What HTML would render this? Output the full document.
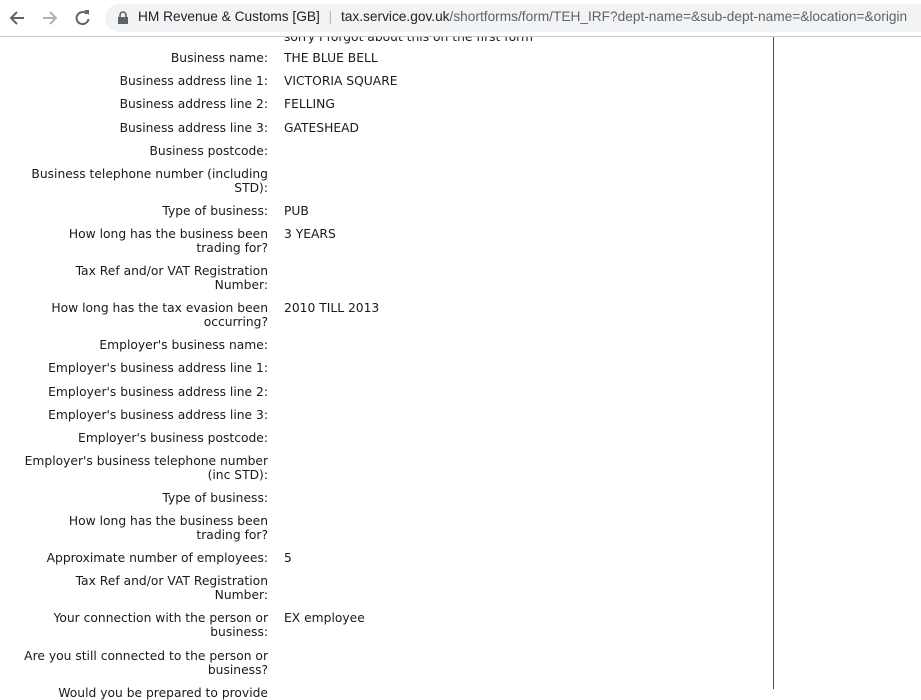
<!DOCTYPE html>
<html><head><meta charset="utf-8"><style>
body{margin:0;width:921px;height:689px;overflow:hidden;background:#fff;position:relative;font-family:"DejaVu Sans",Verdana,sans-serif;font-size:12.3px;color:#1a1a1a}
.bar{position:absolute;left:0;top:0;width:921px;height:36px;background:#fff;border-bottom:1px solid #c8c8c8;z-index:2}
.pill{position:absolute;left:105px;top:4px;width:830px;height:28px;border-radius:14px;background:#f1f3f4}
.url{position:absolute;left:138px;top:9px;font-family:"Liberation Sans",sans-serif;font-size:13.7px;color:#5f6368;white-space:nowrap}
.url b{font-weight:normal;color:#202124}
.r{position:absolute;left:0;width:921px;line-height:14px}
.l{position:absolute;right:653px;text-align:right;white-space:nowrap}
.v{position:absolute;left:284px;white-space:nowrap}
.vl{position:absolute;left:773px;top:36px;width:1px;height:653px;background:#0f6b5a}
</style></head><body>
<div class="bar">
<svg width="100" height="36" style="position:absolute;left:0;top:0">
<path d="M24 18H11M17 12l-6 6 6 6" stroke="#5f6368" stroke-width="2" fill="none"/>
<path d="M43 18h13M50 12l6 6-6 6" stroke="#b0b3b6" stroke-width="2" fill="none"/>
<path d="M87 14a6 6 0 1 0 1.5 5" stroke="#5f6368" stroke-width="2" fill="none"/><path d="M84 10h5v5z" fill="#5f6368"/>
</svg>
<div class="pill"></div>
<svg width="12" height="14" style="position:absolute;left:117px;top:11px"><rect x="1" y="6" width="10" height="7" fill="#5f6368"/><path d="M3 6V4a3 3 0 0 1 6 0v2" stroke="#5f6368" stroke-width="1.6" fill="none"/></svg>
<div class="url"><b>HM Revenue &amp; Customs [GB]</b> <span style="color:#bbb;margin:0 5px">|</span> <b>tax.service.gov.uk</b>/shortforms/form/TEH_IRF?dept-name=&amp;sub-dept-name=&amp;location=&amp;origin</div>
</div>
<div class="r" style="top:30px"><span class="v">sorry I forgot about this on the first form</span></div>
<div class="vl"></div>
<div class="r" style="top:51px"><span class="l">Business name:</span><span class="v">THE BLUE BELL</span></div>
<div class="r" style="top:74px"><span class="l">Business address line 1:</span><span class="v">VICTORIA SQUARE</span></div>
<div class="r" style="top:97px"><span class="l">Business address line 2:</span><span class="v">FELLING</span></div>
<div class="r" style="top:121px"><span class="l">Business address line 3:</span><span class="v">GATESHEAD</span></div>
<div class="r" style="top:144px"><span class="l">Business postcode:</span></div>
<div class="r" style="top:167px"><span class="l">Business telephone number (including<br>STD):</span></div>
<div class="r" style="top:204px"><span class="l">Type of business:</span><span class="v">PUB</span></div>
<div class="r" style="top:227px"><span class="l">How long has the business been<br>trading for?</span><span class="v">3 YEARS</span></div>
<div class="r" style="top:264px"><span class="l">Tax Ref and/or VAT Registration<br>Number:</span></div>
<div class="r" style="top:301px"><span class="l">How long has the tax evasion been<br>occurring?</span><span class="v">2010 TILL 2013</span></div>
<div class="r" style="top:338px"><span class="l">Employer's business name:</span></div>
<div class="r" style="top:361px"><span class="l">Employer's business address line 1:</span></div>
<div class="r" style="top:385px"><span class="l">Employer's business address line 2:</span></div>
<div class="r" style="top:408px"><span class="l">Employer's business address line 3:</span></div>
<div class="r" style="top:431px"><span class="l">Employer's business postcode:</span></div>
<div class="r" style="top:454px"><span class="l">Employer's business telephone number<br>(inc STD):</span></div>
<div class="r" style="top:491px"><span class="l">Type of business:</span></div>
<div class="r" style="top:514px"><span class="l">How long has the business been<br>trading for?</span></div>
<div class="r" style="top:551px"><span class="l">Approximate number of employees:</span><span class="v">5</span></div>
<div class="r" style="top:574px"><span class="l">Tax Ref and/or VAT Registration<br>Number:</span></div>
<div class="r" style="top:611px"><span class="l">Your connection with the person or<br>business:</span><span class="v">EX employee</span></div>
<div class="r" style="top:649px"><span class="l">Are you still connected to the person or<br>business?</span></div>
<div class="r" style="top:686px"><span class="l">Would you be prepared to provide</span></div>
</body></html>
